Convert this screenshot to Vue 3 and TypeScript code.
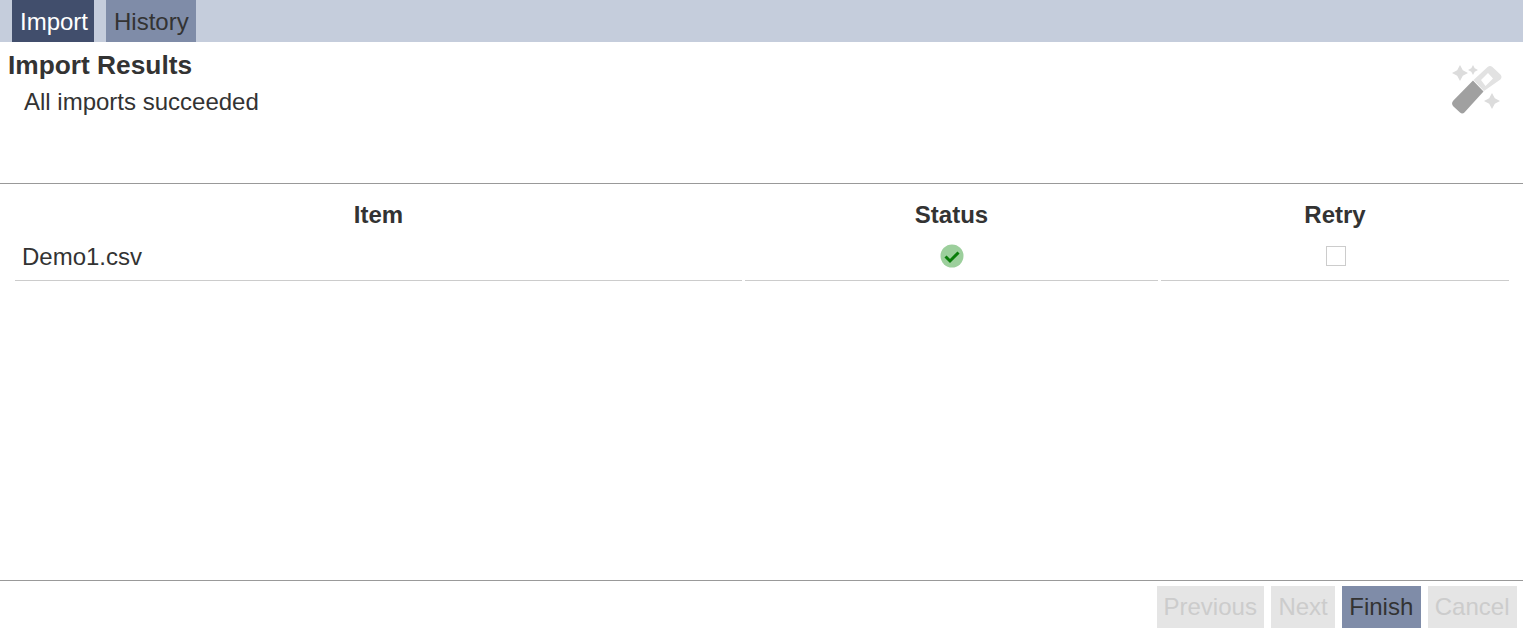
<script setup lang="ts">
const tabs = [
  { label: 'Import', active: true },
  { label: 'History', active: false },
]
const buttons = [
  { label: 'Previous', enabled: false },
  { label: 'Next', enabled: false },
  { label: 'Finish', enabled: true },
  { label: 'Cancel', enabled: false },
]
</script>

<template>
  <div class="page">
    <nav class="tabs">
      <div v-for="t in tabs" :key="t.label" class="tab" :class="{ active: t.active }">{{ t.label }}</div>
    </nav>
    <header class="head">
      <div class="head-text">
        <h1 class="title">Import Results</h1>
        <p class="sub">All imports succeeded</p>
      </div>
      <svg class="wand" width="52" height="52" viewBox="0 0 52 52">
        <path d="M3.4 35.6 L23 15.5 L33.5 26.5 L14.4 47.4 Q12.4 49.6 10 47.6 L3.2 41.2 Q0.8 38.4 3.4 35.6 Z" fill="#a0a0a0"/>
        <path fill-rule="evenodd" d="M23.5 15 L37.6 2 Q40 0 42.4 2 L50.4 9.4 Q52.6 12 50.4 14.4 L34 26 Z M31 15 L35.5 21 L43 13.5 L38 8 Z" fill="#e2e2e2"/>
        <path d="M10 0 L12.8 5.2 L18 8 L12.8 10.8 L10 16 L7.2 10.8 L2 8 L7.2 5.2 Z" fill="#dcdcdc"/>
        <path d="M23 0 L24.7 3.3 L28 5 L24.7 6.7 L23 10 L21.3 6.7 L18 5 L21.3 3.3 Z" fill="#dcdcdc"/>
        <path d="M42 28 L44.8 33.2 L50 36 L44.8 38.8 L42 44 L39.2 38.8 L34 36 L39.2 33.2 Z" fill="#dcdcdc"/>
      </svg>
    </header>
    <main class="content">
      <div class="grid">
        <div class="th">Item</div>
        <div class="th">Status</div>
        <div class="th">Retry</div>
        <div class="td">Demo1.csv</div>
        <div class="td center">
          <svg width="24" height="24" viewBox="0 0 24 24">
            <circle cx="12" cy="12" r="11.5" fill="#9ccf9c"/>
            <path d="M5.5 12.5 L10 17 L18.5 8.5" fill="none" stroke="#0a7d0a" stroke-width="3"/>
          </svg>
        </div>
        <div class="td center"><span class="checkbox"></span></div>
      </div>
    </main>
    <footer class="foot">
      <button v-for="b in buttons" :key="b.label" class="btn" :class="{ enabled: b.enabled }">{{ b.label }}</button>
    </footer>
  </div>
</template>

<style>
html, body { margin: 0; padding: 0; background: #fff; }
</style>

<style scoped>
.page {
  height: 631px;
  display: flex;
  flex-direction: column;
  font-family: "Liberation Sans", Arial, sans-serif;
  font-size: 24px;
  color: #333;
  overflow: hidden;
}
.tabs {
  height: 42px;
  background: #c5cddc;
  display: flex;
  gap: 12px;
  padding-left: 12px;
  flex: none;
}
.tab {
  padding: 0 7px 0 8px;
  line-height: 44px;
  background: #7f8ca8;
}
.tab.active {
  background: #414e6c;
  color: #fff;
  padding: 0 6px 0 8px;
}
.head {
  height: 142px;
  flex: none;
  box-sizing: border-box;
  border-bottom: 1px solid #999;
  display: flex;
  justify-content: space-between;
  padding: 9px 21px 0 8px;
}
.title {
  margin: 0;
  font-size: 26.3px;
  line-height: 28px;
  font-weight: 700;
}
.sub {
  margin: 9px 0 0 16px;
  line-height: 28px;
}
.wand { margin-top: 14px; }
.content {
  flex: 1;
  padding: 14px 14px 0 15px;
}
.grid {
  display: grid;
  grid-template-columns: 727px 413px 348px;
  column-gap: 3px;
}
.th {
  height: 36px;
  line-height: 34px;
  font-weight: 700;
  text-align: center;
}
.td {
  height: 47px;
  box-sizing: border-box;
  border-bottom: 1px solid #ccc;
  padding-left: 7px;
  line-height: 44px;
  display: flex;
  align-items: center;
}
.td.center {
  justify-content: center;
  padding-left: 0;
  padding-bottom: 2px;
}
.checkbox {
  width: 20px;
  height: 20px;
  box-sizing: border-box;
  border: 1px solid #ccc;
  background: #fff;
  margin-left: 2px;
}
.foot {
  height: 51px;
  flex: none;
  box-sizing: border-box;
  border-top: 1px solid #999;
  display: flex;
  justify-content: flex-end;
  gap: 7px;
  padding: 5px 6px 0 0;
}
.btn {
  height: 42px;
  border: 0;
  margin: 0;
  padding: 0 7.5px 0 7px;
  font: inherit;
  background: #e5e5e5;
  color: #ccc;
}
.btn.enabled {
  background: #7f8ca8;
  color: #333;
}
</style>
